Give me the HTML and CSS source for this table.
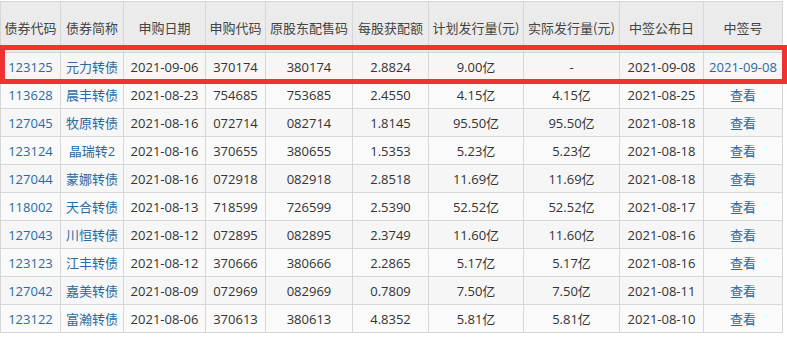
FILE: index.html
```html
<!DOCTYPE html>
<html lang="zh-CN">
  <head>
    <meta charset="UTF-8" />
    <title>可转债申购</title>
    <link rel="stylesheet" href="styles.css">
  </head>
  <body>
    <div class="wrap">
      <table class="bond-table">
        <colgroup>
          <col class="c-code" />
          <col class="c-name" />
          <col class="c-date" />
          <col class="c-sub" />
          <col class="c-alloc" />
          <col class="c-per" />
          <col class="c-plan" />
          <col class="c-real" />
          <col class="c-pub" />
          <col class="c-lot" />
        </colgroup>
        <thead>
          <tr>
            <th>债券代码</th>
            <th>债券简称</th>
            <th>申购日期</th>
            <th>申购代码</th>
            <th>原股东配售码</th>
            <th>每股获配额</th>
            <th>计划发行量(元)</th>
            <th>实际发行量(元)</th>
            <th>中签公布日</th>
            <th>中签号</th>
          </tr>
        </thead>
        <tbody>
          <tr>
            <td class="link">123125</td>
            <td class="link">元力转债</td>
            <td>2021-09-06</td>
            <td>370174</td>
            <td>380174</td>
            <td>2.8824</td>
            <td>9.00亿</td>
            <td>-</td>
            <td>2021-09-08</td>
            <td class="link">2021-09-08</td>
          </tr>
          <tr>
            <td class="link">113628</td>
            <td class="link">晨丰转债</td>
            <td>2021-08-23</td>
            <td>754685</td>
            <td>753685</td>
            <td>2.4550</td>
            <td>4.15亿</td>
            <td>4.15亿</td>
            <td>2021-08-25</td>
            <td class="link">查看</td>
          </tr>
          <tr>
            <td class="link">127045</td>
            <td class="link">牧原转债</td>
            <td>2021-08-16</td>
            <td>072714</td>
            <td>082714</td>
            <td>1.8145</td>
            <td>95.50亿</td>
            <td>95.50亿</td>
            <td>2021-08-18</td>
            <td class="link">查看</td>
          </tr>
          <tr>
            <td class="link">123124</td>
            <td class="link">晶瑞转2</td>
            <td>2021-08-16</td>
            <td>370655</td>
            <td>380655</td>
            <td>1.5353</td>
            <td>5.23亿</td>
            <td>5.23亿</td>
            <td>2021-08-18</td>
            <td class="link">查看</td>
          </tr>
          <tr>
            <td class="link">127044</td>
            <td class="link">蒙娜转债</td>
            <td>2021-08-16</td>
            <td>072918</td>
            <td>082918</td>
            <td>2.8518</td>
            <td>11.69亿</td>
            <td>11.69亿</td>
            <td>2021-08-18</td>
            <td class="link">查看</td>
          </tr>
          <tr>
            <td class="link">118002</td>
            <td class="link">天合转债</td>
            <td>2021-08-13</td>
            <td>718599</td>
            <td>726599</td>
            <td>2.5390</td>
            <td>52.52亿</td>
            <td>52.52亿</td>
            <td>2021-08-17</td>
            <td class="link">查看</td>
          </tr>
          <tr>
            <td class="link">127043</td>
            <td class="link">川恒转债</td>
            <td>2021-08-12</td>
            <td>072895</td>
            <td>082895</td>
            <td>2.3749</td>
            <td>11.60亿</td>
            <td>11.60亿</td>
            <td>2021-08-16</td>
            <td class="link">查看</td>
          </tr>
          <tr>
            <td class="link">123123</td>
            <td class="link">江丰转债</td>
            <td>2021-08-12</td>
            <td>370666</td>
            <td>380666</td>
            <td>2.2865</td>
            <td>5.17亿</td>
            <td>5.17亿</td>
            <td>2021-08-16</td>
            <td class="link">查看</td>
          </tr>
          <tr>
            <td class="link">127042</td>
            <td class="link">嘉美转债</td>
            <td>2021-08-09</td>
            <td>072969</td>
            <td>082969</td>
            <td>0.7809</td>
            <td>7.50亿</td>
            <td>7.50亿</td>
            <td>2021-08-11</td>
            <td class="link">查看</td>
          </tr>
          <tr>
            <td class="link">123122</td>
            <td class="link">富瀚转债</td>
            <td>2021-08-06</td>
            <td>370613</td>
            <td>380613</td>
            <td>4.8352</td>
            <td>5.81亿</td>
            <td>5.81亿</td>
            <td>2021-08-10</td>
            <td class="link">查看</td>
          </tr>
        </tbody>
      </table>
      <div class="mark"></div>
    </div>
  </body>
</html>
```

FILE: styles.css
```css
body {
  margin: 0;
  background: #fff;
  font-family: "Open Sans", "Noto Sans CJK SC", sans-serif;
  font-size: 13px;
  color: #333;
}
.wrap {
  position: relative;
  padding-top: 1px;
}
.bond-table {
  table-layout: fixed;
  width: 782px;
  border-collapse: collapse;
}
.c-code { width: 60px; }
.c-name { width: 63px; }
.c-date { width: 82px; }
.c-sub { width: 60px; }
.c-alloc { width: 87px; }
.c-per { width: 76px; }
.c-plan { width: 95px; }
.c-real { width: 96px; }
.c-pub { width: 84px; }
.c-lot { width: 79px; }
th,
td {
  border: 1px solid #d6d6d6;
  text-align: center;
  white-space: nowrap;
  overflow: hidden;
  padding: 0;
}
th {
  height: 50px;
  background-color: #ebebeb;
  font-family: "Noto Sans CJK SC", sans-serif;
  font-weight: normal;
  color: #444;
}
td {
  height: 27px;
}
tbody tr:nth-child(odd) td {
  background-color: #f6f6f6;
}
tbody tr:nth-child(even) td {
  background-color: #fafafa;
}
.link {
  color: #2a6aa4;
}
.mark {
  position: absolute;
  left: 0;
  top: 45px;
  width: 777px;
  height: 29px;
  border: 5px solid #f03232;
}
```
